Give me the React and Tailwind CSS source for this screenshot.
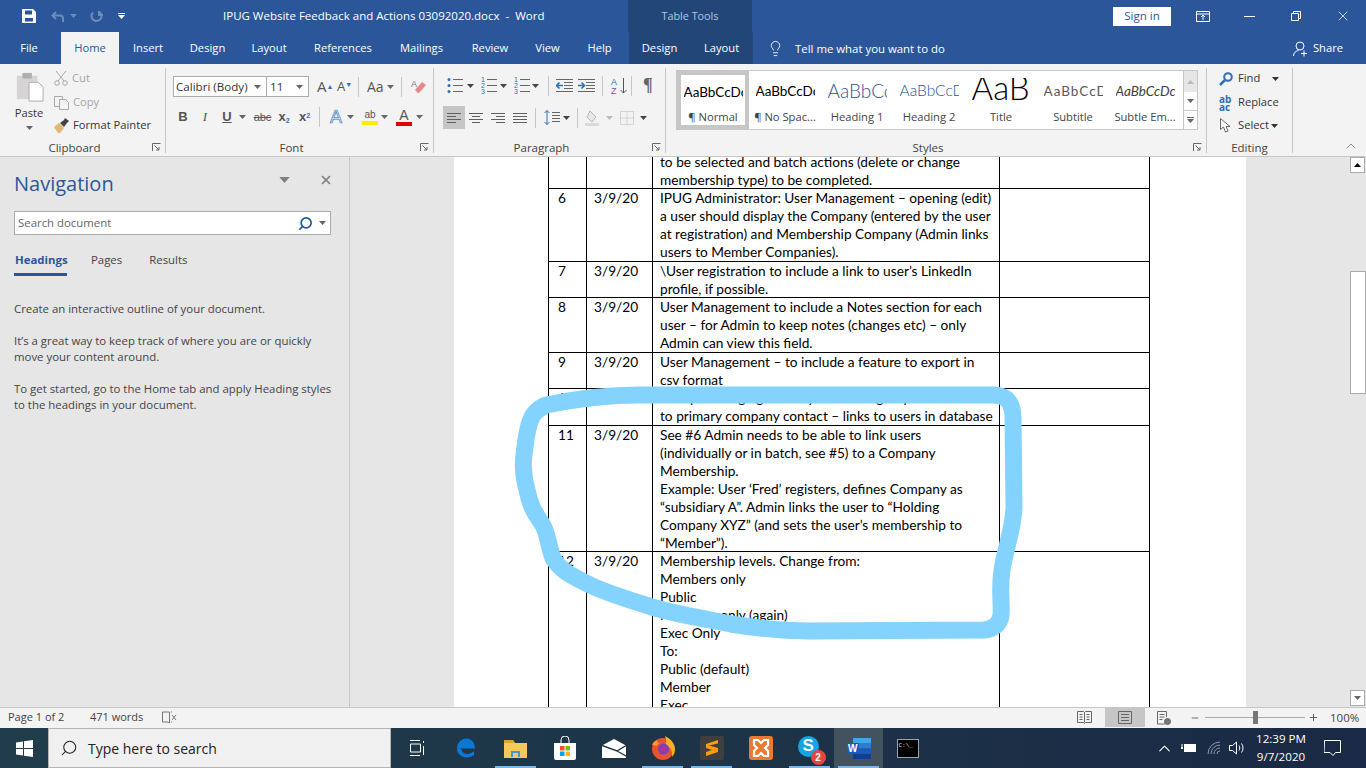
import React from 'react';
import { ChevronUp, Lightbulb, Minus, Plus, Search, X } from 'lucide-react';

const rows = [
  { h: 'h-[36px]', n: '', d: '', lines: ['to be selected and batch actions (delete or change', 'membership type) to be completed.'] },
  { h: 'h-[73px]', n: '6', d: '3/9/20', lines: ['IPUG Administrator: User Management – opening (edit)', 'a user should display the Company (entered by the user', 'at registration) and Membership Company (Admin links', 'users to Member Companies).'] },
  { h: 'h-[36px]', n: '7', d: '3/9/20', lines: ['\\User registration to include a link to user’s LinkedIn', 'profile, if possible.'] },
  { h: 'h-[55px]', n: '8', d: '3/9/20', lines: ['User Management to include a Notes section for each', 'user – for Admin to keep notes (changes etc) – only', 'Admin can view this field.'] },
  { h: 'h-[36px]', n: '9', d: '3/9/20', lines: ['User Management – to include a feature to export in', 'csv format'] },
  { h: 'h-[37px]', n: '10', d: '3/9/20', lines: ['Group messaging – ability to send a group email', 'to primary company contact – links to users in database'] },
  { h: 'h-[126px]', n: '11', d: '3/9/20', lines: ['See #6 Admin needs to be able to link users', '(individually or in batch, see #5) to a Company', 'Membership.', 'Example: User ‘Fred’ registers, defines Company as', '“subsidiary A”. Admin links the user to “Holding', 'Company XYZ” (and sets the user’s membership to', '“Member”).'] },
  { h: 'h-[180px]', n: '12', d: '3/9/20', lines: ['Membership levels. Change from:', 'Members only', 'Public', 'Members only (again)', 'Exec Only', 'To:', 'Public (default)', 'Member', 'Exec'] },
];

const tabs = [
  ['Insert', 'w-[58px]'],
  ['Design', 'w-[61px]'],
  ['Layout', 'w-[62px]'],
  ['References', 'w-[86px]'],
  ['Mailings', 'w-[71px]'],
  ['Review', 'w-[66px]'],
  ['View', 'w-[49px]'],
  ['Help', 'w-[55px]'],
];

const styleItems = [
  { label: 'No Spac...', mark: true, box: 'h-[40px] items-center', cls: 'text-[13.5px] text-black' },
  { label: 'Heading 1', box: 'h-[40px] items-center', cls: 'font-light text-[19px] text-[#2f5496]' },
  { label: 'Heading 2', box: 'h-[40px] items-center', cls: 'font-light text-[15.5px] text-[#2f5496]' },
  { label: 'Title', box: 'mt-[7px] h-[33px] items-start', cls: 'font-light text-[33px] leading-[18px] text-black' },
  { label: 'Subtitle', box: 'h-[40px] items-center', cls: 'text-[13.5px] tracking-[1px] text-[#5a5a5a]' },
  { label: 'Subtle Em...', box: 'h-[40px] items-center', cls: 'italic text-[13.5px] text-[#404040]' },
];

function Caret({ className = 'text-[#666]' }) {
  return (
    <svg width="7" height="4" viewBox="0 0 7 4" className={`shrink-0 ${className}`}>
      <path d="M0 0h7L3.5 4z" fill="currentColor" />
    </svg>
  );
}

function Launcher() {
  return (
    <svg width="9" height="9" viewBox="0 0 9 9" fill="none" stroke="#666">
      <path d="M.5 8V.5H8.5" />
      <path d="M2.5 2.5L7 7M7 4v3H4" />
    </svg>
  );
}

function Lines({ kind }) {
  const sets = {
    left: [[0, 14], [0, 9], [0, 14], [0, 9]],
    center: [[0, 14], [3, 11], [0, 14], [3, 11]],
    right: [[0, 14], [5, 14], [0, 14], [5, 14]],
    justify: [[0, 14], [0, 14], [0, 14], [0, 14]],
  };
  return (
    <svg width="14" height="12" viewBox="0 0 14 12" stroke="#5f5f5f">
      {sets[kind].map(([a, b], i) => (
        <path key={i} d={`M${a} ${1.5 + i * 3}H${b}`} />
      ))}
    </svg>
  );
}

function ListIcon({ kind }) {
  const ys = [2.5, 8.5, 14.5];
  return (
    <svg width="16" height="17" viewBox="0 0 16 17" className="shrink-0">
      {ys.map((y, i) => (
        <g key={y}>
          {kind === 'bullet' ? (
            <circle cx="2" cy={y} r="1.5" fill="#2f6fb5" />
          ) : (
            <text x="0" y={y + 2.5} fontSize="7" fontFamily="Liberation Sans" fill="#2f6fb5">{i + 1}</text>
          )}
          <path d={`M6 ${y}H16`} stroke="#666" />
        </g>
      ))}
    </svg>
  );
}

function IndentIcon({ flip }) {
  return (
    <svg width="17" height="13" viewBox="0 0 17 13" fill="none">
      <path d="M0 .5H17M8 3.5H17M8 6.5H17M8 9.5H17M0 12.5H17" stroke="#666" />
      {flip ? (
        <path d="M0 6.5H6M3.5 3.5L6.5 6.5L3.5 9.5" stroke="#2f6fb5" strokeWidth="1.6" />
      ) : (
        <path d="M7 6.5H1M3.5 3.5L.5 6.5L3.5 9.5" stroke="#2f6fb5" strokeWidth="1.6" />
      )}
    </svg>
  );
}

function Divider({ className = '' }) {
  return <div className={`h-[20px] w-px shrink-0 bg-[#c6c6c6] ${className}`} />;
}

function Group({ label, className, children, launcher = true }) {
  return (
    <div className={`relative h-[85px] shrink-0 border-r border-[#c6c6c6] ${className}`}>
      {children}
      <div className={`absolute bottom-[-3px] left-0 right-0 text-center text-[11.5px] leading-[16px] text-[#444] ${launcher ? 'pr-[16px]' : ''}`}>{label}</div>
      {launcher && (
        <div className="absolute bottom-[1px] right-[4px] flex">
          <Launcher />
        </div>
      )}
    </div>
  );
}

function Ribbon() {
  return (
    <div className="flex h-[93px] shrink-0 border-b border-[#c6c6c6] bg-[#f3f3f3] pt-[4px] text-[11.2px] text-[#444]">
      <Group label="Clipboard" className="w-[166px]">
        <div className="flex">
          <div className="flex w-[54px] flex-col items-center pl-[4px] pt-[4px]">
            <svg width="29" height="30" viewBox="0 0 29 32">
              <path d="M1 4h22v25H1z" fill="#d7d4d6" />
              <path d="M7 1h10v6H7z" fill="#b0aeb0" />
              <path d="M14 11h10l5 5v15H14z" fill="#fff" stroke="#aaa" />
            </svg>
            <span className="mt-[3px] leading-[16px] text-[#333]">Paste</span>
            <Caret className="mt-[5px] text-[#666]" />
          </div>
          <div className="flex flex-col">
            <div className="flex h-[23px] items-center gap-[4px] pb-[2px] text-[#a6a6a6]">
              <svg width="14" height="15" viewBox="0 0 14 15" fill="none" stroke="#a9a9a9">
                <path d="M2 0l8 10M12 0L4 10" />
                <circle cx="3" cy="12" r="2.3" />
                <circle cx="11" cy="12" r="2.3" />
              </svg>
              Cut
            </div>
            <div className="flex h-[23px] items-center gap-[4px] text-[#a6a6a6]">
              <svg width="15" height="14" viewBox="0 0 15 14" fill="#f3f3f3" stroke="#a9a9a9">
                <path d="M.5.500h8v10h-8z" />
                <path d="M5.500 3.500h6l3 3v7h-9z" />
              </svg>
              Copy
            </div>
            <div className="flex h-[23px] items-center gap-[4px] text-[#333]">
              <svg width="15" height="15" viewBox="0 0 15 15">
                <path d="M0 9l5-4 5 5-4 5H4z" fill="#e0b873" />
                <path d="M6 5l4-3 1-2 4 3-2 2-3 4z" fill="#444" />
              </svg>
              Format Painter
            </div>
          </div>
        </div>
      </Group>

      <Group label="Font" className="w-[268px]">
        <div className="mt-[8px] flex h-[21px] items-center pl-[7px]">
          <div className="flex h-[21px] w-[94px] items-center justify-between border border-[#ababab] bg-white pl-[2px] pr-[5px] text-[11.6px] text-[#333]">
            Calibri (Body)
            <Caret />
          </div>
          <div className="ml-[-1px] flex h-[21px] w-[43px] items-center justify-between border border-[#ababab] bg-white pl-[3px] pr-[5px] text-[11.6px] text-[#333]">
            11
            <Caret />
          </div>
          <span className="ml-[8px] w-[20px] text-[15px] text-[#555]">A<sup className="text-[7px] text-[#2f6fb5]">▲</sup></span>
          <span className="w-[20px] text-[13px] text-[#555]">A<sup className="text-[7px] text-[#2f6fb5]">▼</sup></span>
          <Divider className="ml-[1px]" />
          <span className="ml-[8px] text-[14px] text-[#555]">Aa</span>
          <Caret className="ml-[3px] text-[#666]" />
          <Divider className="ml-[7px]" />
          <svg width="15" height="15" viewBox="0 0 15 15" className="ml-[9px]">
            <path d="M7 14l-3-3 7-8 4 3-7 8z" fill="#e8868a" />
            <text x="0" y="8" fontSize="9" fontFamily="Liberation Sans" fill="#777">A</text>
          </svg>
        </div>
        <div className="mt-[9px] flex h-[22px] items-center pl-[6px] font-['Liberation_Sans',sans-serif] text-[13px] text-[#555]">
          <span className="w-[22px] text-center font-bold">B</span>
          <span className="w-[22px] text-center font-['Liberation_Serif',serif] italic">I</span>
          <span className="w-[22px] text-center font-bold underline">U</span>
          <Caret className="ml-[1px] mr-[5px] text-[#666]" />
          <span className="w-[23px] text-center text-[11px] line-through">abc</span>
          <span className="w-[20px] text-center font-bold">x<sub className="text-[7px] text-[#2f6fb5]">2</sub></span>
          <span className="w-[21px] text-center font-bold">x<sup className="text-[7px] text-[#2f6fb5]">2</sup></span>
          <Divider className="ml-[4px]" />
          <span className="ml-[8px] w-[16px] text-center text-[18px] text-[#e6f0fb] [-webkit-text-stroke:0.7px_#3f78b8]">A</span>
          <Caret className="ml-[3px] text-[#666]" />
          <span className="ml-[8px] flex w-[16px] flex-col items-center">
            <span className="text-[10px] leading-[12px]">ab</span>
            <span className="h-[4px] w-[16px] bg-[#ffea00]" />
          </span>
          <Caret className="ml-[3px] text-[#666]" />
          <span className="ml-[8px] flex w-[16px] flex-col items-center">
            <span className="text-[14px] leading-[13px]">A</span>
            <span className="h-[4px] w-[16px] bg-[#e30000]" />
          </span>
          <Caret className="ml-[4px] text-[#666]" />
        </div>
      </Group>

      <Group label="Paragraph" className="w-[232px]">
        <div className="mt-[7px] flex h-[21px] items-center pl-[13px]">
          <ListIcon kind="bullet" />
          <Caret className="ml-[4px] mr-[7px]" />
          <ListIcon kind="number" />
          <Caret className="ml-[3px] mr-[7px]" />
          <ListIcon kind="number" />
          <Caret className="ml-[2px] mr-[9px]" />
          <Divider />
          <span className="ml-[7px] flex"><IndentIcon /></span>
          <span className="ml-[5px] flex"><IndentIcon flip /></span>
          <Divider className="ml-[7px]" />
          <svg width="17" height="18" viewBox="0 0 17 18" className="ml-[8px] shrink-0" fill="none">
            <text x="0" y="8" fontSize="9" fontFamily="Liberation Sans" fill="#2f6fb5">A</text>
            <text x="0" y="17" fontSize="9" fontFamily="Liberation Sans" fill="#8d4bb5">Z</text>
            <path d="M12.500 1v15M9.500 13l3 3 3-3" stroke="#555" />
          </svg>
          <Divider className="ml-[3px]" />
          <span className="ml-[11px] font-['Liberation_Serif',serif] text-[18px] font-bold text-[#666]">¶</span>
        </div>
        <div className="mt-[10px] flex h-[23px] items-center pl-[9px]">
          <div className="flex h-[23px] w-[22px] items-center justify-center bg-[#c6c6c6]"><Lines kind="left" /></div>
          <div className="flex w-[22px] justify-center"><Lines kind="center" /></div>
          <div className="flex w-[22px] justify-center"><Lines kind="right" /></div>
          <div className="flex w-[22px] justify-center"><Lines kind="justify" /></div>
          <Divider className="ml-[4px]" />
          <svg width="16" height="15" viewBox="0 0 16 15" className="ml-[8px]" fill="none">
            <path d="M3 .5v14M.5 3L3 .5 5.500 3M.5 12L3 14.500 5.500 12" stroke="#2f6fb5" />
            <path d="M8 2.500h8M8 5.500h8M8 8.500h8M8 11.500h8" stroke="#666" />
          </svg>
          <Caret className="ml-[3px] mr-[7px]" />
          <Divider />
          <svg width="16" height="16" viewBox="0 0 16 16" className="ml-[7px]">
            <path d="M5 1l6 6-4 5-5-5z" fill="#e8e8e8" stroke="#b5b5b5" />
            <path d="M0 13h14v3H0z" fill="#d9d9d9" />
          </svg>
          <Caret className="ml-[5px] mr-[7px] text-[#bbb]" />
          <svg width="14" height="14" viewBox="0 0 14 14" fill="none" stroke="#b5b5b5" strokeDasharray="1 1">
            <path d="M.5.500h13v13H.5zM7 .5v13M.5 7h13" />
          </svg>
          <Caret className="ml-[6px]" />
        </div>
      </Group>

      <Group label="Styles" className="w-[541px]">
        <div className="ml-[10px] mt-[2px] flex h-[60px] w-[522px] border border-[#c6c6c6] bg-white font-['Lato',sans-serif]">
          <div className="flex w-[72px] shrink-0 flex-col items-center overflow-hidden border-[4px] border-[#c6c6c6]">
            <div className="flex h-[35px] w-[59px] items-center overflow-hidden whitespace-nowrap text-[13.5px] text-black">AaBbCcDc</div>
            <div className="whitespace-nowrap font-['Open_Sans',sans-serif] leading-[14px] text-[#444]">¶ Normal</div>
          </div>
          {styleItems.map((s) => (
            <div key={s.label} className="flex w-[72px] shrink-0 flex-col items-center overflow-hidden">
              <div className={`flex w-[59px] overflow-hidden whitespace-nowrap ${s.box} ${s.cls}`}>AaBbCcDc</div>
              <div className="mt-[-1px] whitespace-nowrap font-['Open_Sans',sans-serif] leading-[14px] text-[#444]">{s.mark ? '¶ ' : ''}{s.label}</div>
            </div>
          ))}
          <div className="ml-auto flex w-[14px] shrink-0 flex-col border-l border-[#c6c6c6]">
            <div className="flex h-[21px] items-center justify-center bg-[#e6e6e6]"><Caret className="rotate-180 text-[#bbb]" /></div>
            <div className="flex h-[19px] items-center justify-center border-b border-[#c6c6c6]"><Caret /></div>
            <div className="flex flex-1 flex-col items-center justify-center gap-[1px]">
              <div className="h-px w-[7px] bg-[#666]" />
              <Caret />
            </div>
          </div>
        </div>
      </Group>

      <Group label="Editing" className="w-[86px]" launcher={false}>
        <div className="flex flex-col pl-[12px] text-[#333]">
          <div className="flex h-[23px] items-center gap-[5px] pb-[2px]">
            <svg width="14" height="14" viewBox="0 0 14 14" fill="none">
              <circle cx="9" cy="5" r="3.8" stroke="#2f6fb5" strokeWidth="2" />
              <path d="M6 8l-5 5" stroke="#2f6fb5" strokeWidth="2.500" />
            </svg>
            Find
            <Caret className="ml-[7px]" />
          </div>
          <div className="flex h-[23px] items-center gap-[3px]">
            <span className="w-[16px] text-[10px] font-bold leading-[8px] text-[#2f6fb5]">ab ac</span>
            Replace
          </div>
          <div className="flex h-[23px] items-center gap-[5px]">
            <svg width="13" height="15" viewBox="0 0 13 15" fill="#fff" stroke="#666" className="ml-[1px]">
              <path d="M.5.500v11l3-2.500 2 5 2.500-1-2-4.500h4z" />
            </svg>
            <span>Select</span>
            <Caret className="ml-[-3px]" />
          </div>
        </div>
      </Group>

      <div className="flex flex-1 items-end justify-end pb-[2px] pr-[7px]">
        <ChevronUp size={16} strokeWidth={1} className="text-[#555]" />
      </div>
    </div>
  );
}

function NavPanel() {
  return (
    <div className="w-[350px] shrink-0 border-r border-[#c6c6c6] bg-[#e6e6e6] px-[14px] text-[11.4px] text-[#444]">
      <div className="flex h-[54px] items-center justify-between">
        <span className="text-[20px] text-[#2b579a]">Navigation</span>
        <div className="mr-[2px] flex items-center gap-[31px] pb-[8px]">
          <Caret className="scale-150 text-[#808080]" />
          <X size={14} strokeWidth={3} className="text-[#808080]" />
        </div>
      </div>
      <div className="flex h-[24px] w-[317px] items-center justify-between border border-[#ababab] bg-white pl-[3px] pr-[4px] text-[#666]">
        Search document
        <div className="flex items-center gap-[6px]">
          <Search size={15} strokeWidth={2.8} className="-scale-x-100 text-[#1f5d9c]" />
          <Caret />
        </div>
      </div>
      <div className="mt-[16px] flex h-[25px] items-start">
        <div className="h-[25px] w-[53px] border-b-[3px] border-[#2b579a] pl-[1px] font-bold text-[#2b579a]">Headings</div>
        <span className="ml-[24px]">Pages</span>
        <span className="ml-[27px]">Results</span>
      </div>
      <div className="mt-[25px] leading-[16px]">
        <p>Create an interactive outline of your document.</p>
        <p className="mt-[16px]">It’s a great way to keep track of where you are or quickly<br />move your content around.</p>
        <p className="mt-[16px]">To get started, go to the Home tab and apply Heading styles<br />to the headings in your document.</p>
      </div>
    </div>
  );
}

function TableRow({ row }) {
  return (
    <div className={`flex shrink-0 border-b border-black ${row.h}`}>
      <div className="w-[38px] shrink-0 border-l border-black pl-[9px]">{row.n}</div>
      <div className="w-[66px] shrink-0 border-l border-black pl-[7px]">{row.d}</div>
      <div className="w-[347px] shrink-0 border-l border-black pl-[7px]">
        {row.lines.map((l) => (
          <div key={l} className="whitespace-nowrap">{l}</div>
        ))}
      </div>
      <div className="w-[151px] shrink-0 border-x border-black" />
    </div>
  );
}

function DocArea() {
  return (
    <div className="relative flex min-w-0 flex-1 overflow-hidden bg-[#e6e6e6]">
      <div className="ml-[104px] h-full w-[792px] overflow-hidden bg-white">
        <div className="ml-[94px] mt-[-4px] flex w-[602px] flex-col font-['Lato',sans-serif] text-[13.7px] leading-[18px] text-black">
          {rows.map((r) => (
            <TableRow key={r.n + r.h} row={r} />
          ))}
        </div>
      </div>
      <div className="ml-auto flex w-[17px] flex-col items-center">
        <div className="flex h-[16px] w-[15px] items-center justify-center border border-[#ababab] bg-white"><Caret className="rotate-180" /></div>
        <div className="mt-[98px] h-[123px] w-[16px] border border-[#ababab] bg-white" />
        <div className="mb-[1px] mt-auto flex h-[16px] w-[15px] items-center justify-center border border-[#ababab] bg-white"><Caret /></div>
      </div>
    </div>
  );
}

function StatusBar() {
  return (
    <div className="flex h-[21px] shrink-0 items-center border-t border-[#c6c6c6] bg-[#f3f3f3] pb-[1px] pl-[8px] text-[11px] text-[#444]">
      <span className="w-[82px]">Page 1 of 2</span>
      <span className="w-[72px]">471 words</span>
      <svg width="15" height="13" viewBox="0 0 15 13" fill="none" stroke="#777">
        <path d="M6 1H.5v10H6l1.500 1V1zM9 1h1M9 11h1" />
        <path d="M10 4l4 5M14 4l-4 5" />
      </svg>
      <div className="ml-auto flex h-full items-center">
        <svg width="15" height="13" viewBox="0 0 15 13" fill="none" stroke="#666">
          <path d="M.5.500h6l1 1 1-1h6v11h-6l-1 1-1-1h-6zM7.500 1.500v10M2.500 3.500h3M2.500 6h3M2.500 8.500h3M9.500 3.500h3M9.500 6h3M9.500 8.500h3" />
        </svg>
        <div className="ml-[13px] flex h-full w-[40px] items-center justify-center bg-[#c6c6c6]">
          <svg width="14" height="13" viewBox="0 0 14 13" fill="none" stroke="#666">
            <path d="M.5.500h13v12H.5zM3 3.500h8M3 6.500h8M3 9.500h8" />
          </svg>
        </div>
        <svg width="14" height="14" viewBox="0 0 14 14" fill="none" stroke="#666" className="ml-[12px]">
          <path d="M8 13H.5V.5h9V6M2.500 3.500h5M2.500 6h5M2.500 8.500h3" />
          <circle cx="10.500" cy="10.500" r="3" fill="#777" />
        </svg>
        <Minus size={10} className="ml-[19px] text-[#555]" />
        <div className="relative ml-[5px] flex h-[13px] w-[100px] items-center">
          <div className="h-px w-full bg-[#ababab]" />
          <div className="absolute left-[48px] top-0 h-[13px] w-[5px] bg-[#777]" />
        </div>
        <Plus size={11} className="ml-[3px] text-[#555]" />
        <span className="ml-[11px] w-[36px] text-[11.5px] text-[#444]">100%</span>
      </div>
    </div>
  );
}

function TaskIcon({ children, line, active }) {
  return (
    <div className={`relative flex h-full w-[49px] shrink-0 items-center justify-center ${active ? 'bg-[#42525f]' : ''}`}>
      {children}
      {line && <div className="absolute bottom-0 left-[4px] right-[4px] h-[2px] bg-[#76b9ed]" />}
    </div>
  );
}

function Taskbar() {
  return (
    <div className="flex h-[40px] shrink-0 items-center bg-linear-to-r from-[#213d4b] via-[#1d3448] to-[#1a2945] text-white">
      <div className="flex h-full w-[48px] items-center justify-center">
        <svg width="17" height="17" viewBox="0 0 17 17" fill="#fff">
          <path d="M0 2.500L7 1.500V8H0zM8 1.300L17 0V8H8zM0 9h7v6.500L0 14.500zM8 9h9v8l-9-1.300z" />
        </svg>
      </div>
      <div className="flex h-full w-[343px] items-center border border-[#b5b5b5] bg-[#f0f0f0] pl-[11px] text-[14px] text-[#222]">
        <Search size={18} strokeWidth={1.4} className="-scale-x-100 text-[#222]" />
        <span className="ml-[10px]">Type here to search</span>
      </div>
      <div className="ml-[1px] flex h-full items-center">
        <TaskIcon>
          <svg width="16" height="16" viewBox="0 0 16 16" fill="none" stroke="#fff">
            <path d="M1 .5h10M1 15.500h10M1.500 4h10v8h-10zM14.500 1v2M14.500 6v9" />
          </svg>
        </TaskIcon>
        <div className="w-px" />
        <TaskIcon>
          <svg width="21" height="22" viewBox="0 0 21 22" fill="none">
            <path d="M3 11.500h16C19 5 15 1.500 10.500 1.500 5 1.500 1 6 1 11.500 1 17 5 20.500 11 20.500c3 0 5-1 7-2.500v-4c-2 2-4 3-6.500 3-3 0-5.500-1.500-5.800-4.500M6 8.500h8c0-2-2-3.500-4-3.500S6.500 6.500 6 8.500z" fill="#0a78d4" />
          </svg>
        </TaskIcon>
        <TaskIcon line>
          <svg width="23" height="19" viewBox="0 0 23 19">
            <path d="M0 1h9l2 3h12v15H0z" fill="#f7c85a" />
            <path d="M0 1h9l2 3H0z" fill="#d9a32e" />
            <path d="M7 12h9v6H7z" fill="#3f9bd8" />
            <path d="M9 14h5v4H9z" fill="#f7c85a" />
          </svg>
        </TaskIcon>
        <TaskIcon>
          <svg width="24" height="24" viewBox="0 0 24 24" fill="none">
            <path d="M8 7V4a4 4 0 018 0v3" stroke="#fff" />
            <path d="M1 7h22v15a2 2 0 01-2 2H3a2 2 0 01-2-2z" fill="#fff" />
            <path d="M7 10h4.500v4.500H7z" fill="#f25022" />
            <path d="M12.500 10H17v4.500h-4.500z" fill="#7fba00" />
            <path d="M7 15.500h4.500V20H7z" fill="#00a4ef" />
            <path d="M12.500 15.500H17V20h-4.500z" fill="#ffb900" />
          </svg>
        </TaskIcon>
        <TaskIcon>
          <svg width="24" height="19" viewBox="0 0 24 19">
            <path d="M0 6.500L12 0l12 6.500V19H0z" fill="#fff" />
            <path d="M0 6.500L15 12l9-5.500M15 12l9 5" fill="none" stroke="#203647" strokeWidth="1.400" />
          </svg>
        </TaskIcon>
        <TaskIcon line>
          <svg width="24" height="24" viewBox="0 0 24 24">
            <circle cx="12" cy="13" r="11" fill="#e8522d" />
            <path d="M14 0c6 3 10 8 10 13 0 3-1 6-3 8 1-6-2-11-7-12 2-3 1-6 0-9z" fill="#ffb020" />
            <path d="M1 9c1-3 3-4 5-5 0 2 1 3 3 3-2 1-3 2-3 3z" fill="#ff9430" />
            <circle cx="12.500" cy="13" r="5.500" fill="#7b3fc4" />
            <circle cx="12" cy="13" r="2.500" fill="#b6347f" />
          </svg>
        </TaskIcon>
        <TaskIcon line>
          <svg width="24" height="24" viewBox="0 0 24 24">
            <rect width="24" height="24" rx="2" fill="#3f3f3f" />
            <path d="M18 4L6 8v4l12 4v-4L9 9.500 18 7.500zM6 20l12-4v-4L6 16z" fill="#ff9a0d" />
          </svg>
        </TaskIcon>
        <TaskIcon>
          <svg width="24" height="24" viewBox="0 0 24 24">
            <rect width="24" height="24" rx="3" fill="#e97a31" />
            <path d="M5 4h4l3 3 3-3h4v5l-3 3 3 3v5h-4l-3-3-3 3H5v-5l3-3-3-3z" fill="none" stroke="#fff" strokeWidth="2.200" />
          </svg>
        </TaskIcon>
        <TaskIcon line>
          <div className="relative h-[24px] w-[24px]">
            <svg width="21" height="21" viewBox="0 0 21 21">
              <circle cx="10.500" cy="10.500" r="10.500" fill="#12a5e6" />
            </svg>
            <span className="absolute left-[5px] top-[-1px] font-['Liberation_Sans',sans-serif] text-[17px] font-bold leading-[22px]">S</span>
            <span className="absolute bottom-[-5px] right-[-4px] flex h-[15px] w-[15px] items-center justify-center rounded-full bg-[#e3463c] font-['Liberation_Sans',sans-serif] text-[10px] font-bold">2</span>
          </div>
        </TaskIcon>
        <TaskIcon line active>
          <div className="relative h-[21px] w-[24px]">
            <svg width="24" height="21" viewBox="0 0 24 21">
              <path d="M6 0h18v5H6z" fill="#41a5ee" />
              <path d="M6 5h18v5.500H6z" fill="#2b7cd3" />
              <path d="M6 10.500h18V16H6z" fill="#185abd" />
              <path d="M6 16h18v5H6z" fill="#103f91" />
              <rect x="0" y="5" width="12" height="11" rx="1" fill="#185abd" />
            </svg>
            <span className="absolute left-[1.500px] top-[4px] font-['Liberation_Sans',sans-serif] text-[10px] font-bold leading-[13px]">W</span>
          </div>
        </TaskIcon>
        <TaskIcon>
          <div className="h-[19px] w-[22px] border border-[#9aa4ab] bg-black pl-[1px] pt-[2px] font-['Liberation_Mono',monospace] text-[6px] leading-[7px] text-[#ddd]">C:\_</div>
        </TaskIcon>
      </div>
      <div className="ml-auto flex h-full items-center">
        <ChevronUp size={19} strokeWidth={1.4} />
        <svg width="16" height="10" viewBox="0 0 16 10" className="ml-[7px]" fill="#fff">
          <path d="M3 1h12v8H3zM0 4h2v2H0zM.5 1h1v3h-1z" />
        </svg>
        <svg width="15" height="14" viewBox="0 0 15 14" className="ml-[10px]" fill="none" stroke="#8f9aa6">
          <path d="M1 13a12 12 0 0112-12M4 13a9 9 0 019-9M7 13a6 6 0 016-6M10 13a3 3 0 013-3" />
        </svg>
        <svg width="17" height="14" viewBox="0 0 17 14" className="ml-[7px]" fill="none" stroke="#fff">
          <path d="M.5 4.500h3L7.500 1v12L3.500 9.500h-3zM10 4.500c1 1.500 1 3.500 0 5M12.500 2.500c2 2.500 2 6.500 0 9" />
        </svg>
        <div className="ml-[7px] w-[56px] whitespace-nowrap text-center text-[11.6px] leading-[18px]">
          <div>12:39 PM</div>
          <div>9/7/2020</div>
        </div>
        <div className="ml-[15px] mr-[25px]">
          <svg width="17" height="16" viewBox="0 0 17 16" fill="none" stroke="#fff">
            <path d="M.5.500h16v12h-5l-2.500 3-3-3h-6z" />
          </svg>
        </div>
      </div>
    </div>
  );
}

export default function App() {
  return (
    <div className="relative flex h-[768px] w-[1366px] flex-col overflow-hidden font-['Open_Sans',sans-serif]">
      {/* title bar */}
      <div className="flex h-[32px] shrink-0 items-center bg-[#2b579a] text-[11.5px] text-white">
        <svg width="14" height="14" viewBox="0 0 14 14" className="ml-[22px]" fill="#fff">
          <path fillRule="evenodd" d="M0 0h11l3 3v11H0zM3 1.500v4h7v-4zM3 9v3.500h8V9z" />
        </svg>
        <svg width="14" height="11" viewBox="0 0 14 11" className="ml-[15px]" fill="none" stroke="#6d8cbc" strokeWidth="2">
          <path d="M5 1L1.500 4.500 5 8M2 4.500h7a3 3 0 013 3V11" />
        </svg>
        <Caret className="ml-[5px] text-[#6d8cbc]" />
        <svg width="13" height="13" viewBox="0 0 13 13" className="ml-[13px]" fill="none" stroke="#6d8cbc" strokeWidth="2">
          <path d="M3 2.500a5 5 0 106.500-.5M9 1v4h4" />
        </svg>
        <svg width="7" height="6" viewBox="0 0 7 6" className="ml-[15px]" fill="#fff">
          <path d="M0 0h7v1H0zM0 2h7L3.500 6z" />
        </svg>
        <span className="ml-[98px] w-[405px] whitespace-pre">IPUG Website Feedback and Actions 03092020.docx  -  Word</span>
        <div className="flex h-full w-[124px] items-center justify-center bg-[#234679] text-[10.8px] text-[#b4c6e0]">Table Tools</div>
        <div className="ml-auto flex h-full items-center">
          <div className="mr-[-3px] flex h-[19px] w-[58px] items-center justify-center bg-white text-[#2b579a]">Sign in</div>
          <svg width="14" height="11" viewBox="0 0 14 11" fill="none" stroke="#fff" className="ml-[28px]">
            <path d="M.5.500h13v10H.5zM.5 3h13M7 9V4.500M5 6l2-2 2 2" />
          </svg>
          <svg width="11" height="1" viewBox="0 0 11 1" className="ml-[34px]" fill="#fff"><path d="M0 0h11v1H0z" /></svg>
          <svg width="10" height="10" viewBox="0 0 10 10" className="ml-[36px]" fill="none" stroke="#fff">
            <path d="M.5 2.500h7v7h-7zM2.500 2.500v-2h7v7h-2" />
          </svg>
          <X size={16} strokeWidth={1.1} className="ml-[34px] mr-[15px]" />
        </div>
      </div>

      {/* tabs */}
      <div className="flex h-[32px] shrink-0 items-stretch bg-[#2b579a] pt-[1px] text-[11.2px] text-white">
        <div className="flex w-[61px] items-center justify-center pr-[3px]">File</div>
        <div className="mt-[-1px] flex w-[58px] items-center justify-center bg-[#f3f3f3] pt-[1px] text-[#2b579a]">Home</div>
        {tabs.map(([t, w]) => (
          <div key={t} className={`flex items-center justify-center ${w}`}>{t}</div>
        ))}
        <div className="ml-[2px] mt-[-1px] flex w-[124px] bg-[#234679] pt-[1px]">
          <div className="flex w-[61px] items-center justify-center">Design</div>
          <div className="flex w-[63px] items-center justify-center">Layout</div>
        </div>
        <div className="ml-[14px] flex items-center">
          <Lightbulb size={17} strokeWidth={1.2} />
          <span className="ml-[11px] text-[11.4px]">Tell me what you want to do</span>
        </div>
        <div className="ml-auto mr-[23px] flex items-center gap-[5px]">
          <svg width="15" height="16" viewBox="0 0 15 16" fill="none" stroke="#fff">
            <circle cx="7" cy="5" r="4" />
            <path d="M.5 15c0-3 2-5 5-5.500M8 12.500h6M11 9.500v6" />
          </svg>
          Share
        </div>
      </div>

      <Ribbon />

      <div className="flex min-h-0 flex-1">
        <NavPanel />
        <DocArea />
      </div>

      <StatusBar />
      <Taskbar />

      {/* hand-drawn highlight over the document */}
      <svg width="1366" height="768" viewBox="0 0 1366 768" className="pointer-events-none absolute left-0 top-0" fill="none">
        <path
          d="M546 405 C575 399 610 395 640 395 L993 395 C1007 395 1013 403 1013 418 L1014 508 C1013 530 1005 550 1002 570 C999 590 1002 603 1001 615 C1000 624 994 629 984 630 L810 631 C780 631 755 628 731 624 C700 618 675 614 652 607 C630 600 605 593 586 583 C570 575 560 570 553 558 C548 545 548 532 541 522 C534 512 530 505 527 490 C522 472 523 460 525 447 C527 430 530 420 533 415 C537 410 541 407 546 405Z"
          stroke="#83d3fe"
          strokeWidth="17"
          strokeLinejoin="round"
        />
      </svg>
    </div>
  );
}
